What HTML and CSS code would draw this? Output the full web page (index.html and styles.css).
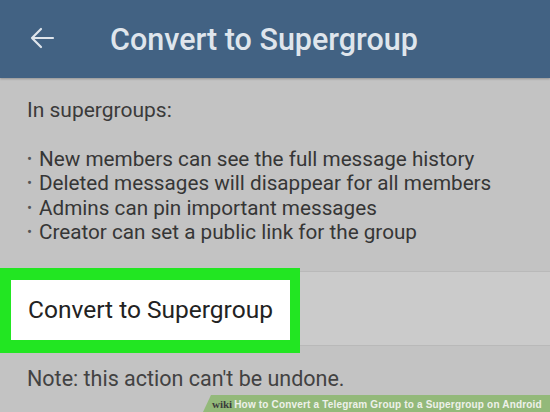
FILE: index.html
```html
<!DOCTYPE html>
<html>
<head>
<meta charset="utf-8">
<link rel="stylesheet" href="styles.css">
</head>
<body>
<div class="page">
  <header class="bar">
    <svg class="back" width="26" height="22" viewBox="0 0 26 22">
      <path d="M24 11H3M12 2L3 11l9 9" fill="none" stroke="#dfe5ec" stroke-width="2.2" stroke-linecap="round" stroke-linejoin="round"/>
    </svg>
    <h1 class="title">Convert to Supergroup</h1>
  </header>
  <section class="info">
    <p class="lead">In supergroups:</p>
    <ul class="list">
      <li>New members can see the full message history</li>
      <li>Deleted messages will disappear for all members</li>
      <li>Admins can pin important messages</li>
      <li>Creator can set a public link for the group</li>
    </ul>
  </section>
  <div class="action">
    <div class="highlight"><div class="btn">Convert to Supergroup</div></div>
    <div class="band"></div>
  </div>
  <p class="note">Note: this action can't be undone.</p>
  <div class="wiki"><span class="w1">wiki</span><span class="w2">How to Convert a Telegram Group to a Supergroup on Android</span></div>
</div>
</body>
</html>
```
FILE: styles.css
```css
html, body {
  margin: 0;
  padding: 0;
}
body {
  width: 550px;
  height: 412px;
  overflow: hidden;
  background: #c3c3c3;
  font-family: Roboto, "Liberation Sans", sans-serif;
}
.page {
  position: relative;
  width: 550px;
  height: 412px;
}
.bar {
  height: 78px;
  background: #426283;
  display: flex;
  align-items: center;
  box-shadow: 0 1px 2px rgba(0,0,0,0.25);
}
.back {
  margin-left: 29px;
  margin-top: -2px;
}
.title {
  margin: 0 0 0 55px;
  font-size: 30.5px;
  font-weight: 500;
  color: #dfe5ec;
}
.info {
  padding: 20px 0 0 27px;
}
.lead {
  margin: 0;
  font-size: 21px;
  line-height: 24px;
  color: #3a3a3a;
}
.list {
  list-style: none;
  margin: 25px 0 0 0;
  padding: 0;
  font-size: 20.7px;
  line-height: 24.4px;
  color: #363636;
}
.list li {
  display: flex;
}
.list li::before {
  content: "\2022";
  flex: none;
  width: 12px;
  color: #555;
  font-size: 15px;
}
.action {
  display: flex;
  align-items: flex-start;
  margin-top: 23.5px;
}
.highlight {
  width: 279px;
  height: 60px;
  border-style: solid;
  border-color: #22e622;
  border-width: 12px 10px 13px 11px;
  background: #fff;
  flex: none;
}
.btn {
  padding: 16px 0 0 17px;
  font-size: 24.5px;
  line-height: 28px;
  color: #222;
}
.band {
  flex: 1;
  height: 73px;
  margin-top: 3px;
  background: #cbcbcb;
  border-top: 1px solid #b9b9b9;
  border-bottom: 1px solid #b9b9b9;
}
.note {
  margin: 14px 0 0 27px;
  font-size: 21.5px;
  line-height: 24px;
  color: #424242;
}
.wiki {
  position: absolute;
  right: 0;
  bottom: 0;
  width: 347px;
  height: 17px;
  background: #93b97a;
  clip-path: polygon(8px 0, 100% 0, 100% 100%, 0 100%);
  font-family: "Liberation Sans", Arial, sans-serif;
  font-size: 10px;
  line-height: 18px;
  padding-left: 9px;
  box-sizing: border-box;
  white-space: nowrap;
}
.w1 {
  font-family: "Liberation Serif", serif;
  font-size: 11px;
  font-weight: bold;
  color: #3c3c3c;
}
.w2 {
  color: #eef1ea;
  font-weight: bold;
  margin-left: 2px;
  letter-spacing: 0.18px;
}
```
